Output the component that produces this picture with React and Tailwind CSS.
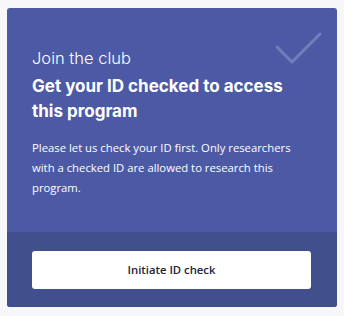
export default function App() {
  return (
    <div className="min-h-[316px] bg-[#f7f7fa] pt-2 pl-[7px]">
      <div className="relative w-[330px] h-[299px] rounded-[3px] bg-[#4c5aa5] overflow-hidden flex flex-col">
        <svg className="absolute left-[261px] top-[16px]" width="60" height="46" viewBox="0 0 60 46" fill="none">
          <path d="M9 23 L24 38 L52 10" stroke="rgba(255,255,255,0.22)" strokeWidth="3" strokeLinecap="round" strokeLinejoin="round" />
        </svg>
        <div className="flex-1 px-[25px] pt-[38px] text-white">
          <div className="text-[16.5px] leading-[24px] font-light font-['Inter',sans-serif]">Join the club</div>
          <div className="mt-[4px] text-[17px] leading-[25px] font-bold font-['Inter',sans-serif] w-[270px]">
            Get your ID checked to access this program
          </div>
          <p className="mt-[14px] text-[11.3px] leading-[20px] font-medium font-['Open_Sans',sans-serif] w-[270px]">
            Please let us check your ID first. Only researchers with a checked ID are allowed to research this program.
          </p>
        </div>
        <div className="bg-[#414f8c] px-[25px] pt-[19px] pb-[18px]">
          <button className="w-[279px] h-[38px] rounded-[3px] bg-white text-[#24243a] text-[11.3px] font-semibold font-['Open_Sans',sans-serif]">
            Initiate ID check
          </button>
        </div>
      </div>
    </div>
  );
}
